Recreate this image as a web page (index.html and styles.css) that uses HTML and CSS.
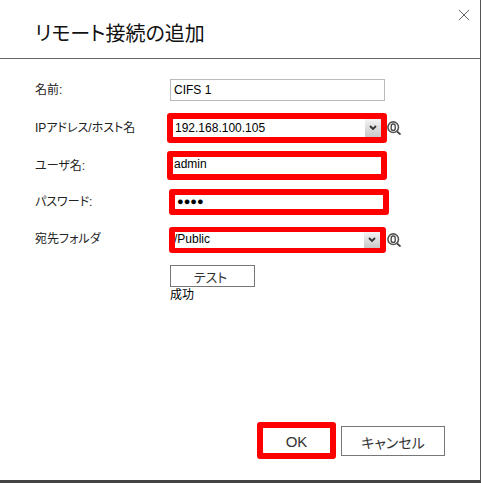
FILE: index.html
```html
<!DOCTYPE html>
<html lang="ja">
<head>
  <meta charset="UTF-8">
  <title>リモート接続の追加</title>
  <link rel="stylesheet" href="styles.css">
</head>
<body>
  <div class="dialog">
    <button class="close-btn" aria-label="閉じる">
      <svg width="12" height="12" viewBox="0 0 12 12"><path d="M1 1 L11 11 M11 1 L1 11" stroke="#666" stroke-width="1" fill="none"/></svg>
    </button>
    <h1 class="dialog-title">リモート接続の追加</h1>

    <div class="form">
      <div class="row row-name">
        <label class="row-label">名前:</label>
        <div class="field plain-field">CIFS 1</div>
      </div>

      <div class="row row-ip">
        <label class="row-label">IPアドレス/ホスト名</label>
        <div class="mark mark-ip">
          <div class="field combo">
            <span class="combo-text">192.168.100.105</span>
            <span class="combo-arrow"><svg width="8" height="6" viewBox="0 0 8 6"><path d="M1 1 L4 4 L7 1" stroke="#333" stroke-width="1.8" fill="none"/></svg></span>
          </div>
        </div>
        <svg class="search-icon" width="14" height="14" viewBox="0 0 14 14"><circle cx="6.2" cy="6.2" r="5.3" stroke="#555" stroke-width="1.6" fill="#fff"/><path d="M10 10.5 L13.5 13.5" stroke="#444" stroke-width="1.8"/><rect x="4.2" y="3" width="4" height="6.4" rx="2" stroke="#444" stroke-width="1.3" fill="none"/></svg>
      </div>

      <div class="row row-user">
        <label class="row-label">ユーザ名:</label>
        <div class="mark mark-user">
          <div class="field text-field">admin</div>
        </div>
      </div>

      <div class="row row-pass">
        <label class="row-label">パスワード:</label>
        <div class="mark mark-pass">
          <div class="field pass-field">●●●●</div>
        </div>
      </div>

      <div class="row row-folder">
        <label class="row-label">宛先フォルダ</label>
        <div class="mark mark-folder">
          <div class="field combo">
            <span class="combo-text folder-text">/Public</span>
            <span class="combo-arrow"><svg width="8" height="6" viewBox="0 0 8 6"><path d="M1 1 L4 4 L7 1" stroke="#333" stroke-width="1.8" fill="none"/></svg></span>
          </div>
        </div>
        <svg class="search-icon" width="14" height="14" viewBox="0 0 14 14"><circle cx="6.2" cy="6.2" r="5.3" stroke="#555" stroke-width="1.6" fill="#fff"/><path d="M10 10.5 L13.5 13.5" stroke="#444" stroke-width="1.8"/><rect x="4.2" y="3" width="4" height="6.4" rx="2" stroke="#444" stroke-width="1.3" fill="none"/></svg>
      </div>

      <div class="test-block">
        <button class="btn test-btn">テスト</button>
        <div class="test-result">成功</div>
      </div>
    </div>

    <div class="footer">
      <div class="mark mark-ok"><button class="btn ok-btn">OK</button></div>
      <button class="btn cancel-btn">キャンセル</button>
    </div>
  </div>
</body>
</html>
```

FILE: styles.css
```css
/* General Styles */
html, body {
  height: 100%;
}

body {
  margin: 0;
  background: #fff;
  color: #000;
  font-family: "Liberation Sans", "Noto Sans CJK JP", sans-serif;
  font-size: 12px;
  font-feature-settings: "palt";
  overflow: hidden;
}

/* Dialog */
.dialog {
  position: relative;
  box-sizing: border-box;
  width: 481px;
  height: 483px;
  background: #fff;
  border-right: 1px solid #555;
  border-bottom: 3px solid #444;
  display: flex;
  flex-direction: column;
}

.close-btn {
  position: absolute;
  top: 9px;
  right: 10px;
  padding: 0;
  border: none;
  background: none;
  line-height: 0;
}

.dialog-title {
  margin: 0;
  height: 59px;
  box-sizing: border-box;
  padding: 21px 0 0 35px;
  font-size: 20px;
  line-height: 26px;
  font-weight: normal;
  color: #111;
  border-bottom: 1px solid #666;
}

/* Form rows */
.form {
  padding-top: 20px;
  display: flex;
  flex-direction: column;
}

.row {
  display: flex;
  align-items: center;
}

.row-label {
  box-sizing: border-box;
  width: 170px;
  padding-left: 35px;
  padding-bottom: 3px;
  color: #222;
}

.row-name { height: 22px; }
.row-ip { height: 30px; margin-top: 12px; }
.row-user { height: 29px; margin-top: 8px; }
.row-pass { height: 26px; margin-top: 9px; }
.row-folder { height: 26px; margin-top: 12px; }
.row-folder .row-label { padding-bottom: 5px; }

.field {
  box-sizing: border-box;
  background: #fff;
  font-size: 12px;
  color: #000;
}

.plain-field {
  width: 215px;
  height: 22px;
  line-height: 20px;
  padding-left: 3px;
  border: 1px solid #bbb;
}

/* Red annotation boxes */
.mark {
  box-sizing: border-box;
  border: 6px solid #f00;
  border-radius: 3px;
}

.mark-ip { width: 220px; height: 30px; margin-left: -3px; }
.mark-user { width: 220px; height: 29px; margin-left: -3px; }
.mark-pass { width: 220px; height: 26px; margin-left: -1px; }
.mark-folder { width: 217px; height: 26px; margin-left: -1px; border-width: 5px 6px; }
.mark-ok { width: 79px; height: 37px; }

.combo {
  display: flex;
  align-items: center;
  height: 100%;
  overflow: hidden;
}

.combo-text {
  flex: 1;
  padding-left: 2px;
}

.folder-text {
  margin-left: -1px;
  padding-left: 0;
  padding-bottom: 2px;
}

.combo-arrow {
  width: 16px;
  height: 100%;
  display: flex;
  align-items: center;
  justify-content: center;
  background: linear-gradient(#f4f4f4, #c8c8c8);
}

.text-field {
  height: 100%;
  line-height: 14px;
  padding-left: 1px;
}

.pass-field {
  height: 100%;
  line-height: 13px;
  padding-left: 2px;
  font-size: 11px;
}

.search-icon {
  flex: none;
}

.row-folder .search-icon {
  margin-left: 1px;
}

/* Buttons */
.btn {
  box-sizing: border-box;
  background: #fff;
  border: 1px solid #777;
  padding: 0;
  color: #333;
  font-family: inherit;
  font-feature-settings: inherit;
}

.test-block {
  margin-top: 12px;
  margin-left: 170px;
}

.test-btn {
  display: block;
  width: 85px;
  height: 22px;
  padding-right: 4px;
  font-size: 13px;
}

.test-result {
  margin-top: 1px;
  line-height: 14px;
}

.footer {
  display: flex;
  align-items: center;
  gap: 5px;
  margin-top: auto;
  padding: 0 0 21px 257px;
}

.ok-btn {
  display: block;
  width: 100%;
  height: 100%;
  border: none;
  padding-top: 2px;
  font-size: 15px;
}

.cancel-btn {
  width: 104px;
  height: 30px;
  padding-top: 2px;
  font-size: 14px;
}
```
